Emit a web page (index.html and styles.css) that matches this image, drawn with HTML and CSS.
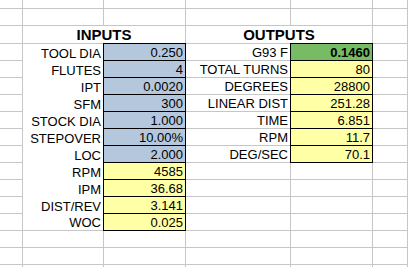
FILE: index.html
```html
<!DOCTYPE html>
<html>
<head>
<meta charset="utf-8">
<link rel="stylesheet" href="styles.css">
</head>
<body>
<div class="sheet">
  <div class="c"></div><div class="c"></div><div class="c"></div><div class="c"></div><div class="c"></div><div class="c"></div>
  <div class="c"></div><div class="c"></div><div class="c"></div><div class="c"></div><div class="c"></div><div class="c"></div>

  <div class="c"></div><div class="c hd">INPUTS</div><div class="c hd">OUTPUTS</div><div class="c"></div>

  <div class="c"></div><div class="c lab">TOOL DIA</div><div class="c d in">0.250</div><div class="c r">G93 F</div><div class="c d g">0.1460</div><div class="c"></div>
  <div class="c"></div><div class="c lab">FLUTES</div><div class="c d in">4</div><div class="c r">TOTAL TURNS</div><div class="c d out">80</div><div class="c"></div>
  <div class="c"></div><div class="c lab">IPT</div><div class="c d in">0.0020</div><div class="c r">DEGREES</div><div class="c d out">28800</div><div class="c"></div>
  <div class="c"></div><div class="c lab">SFM</div><div class="c d in">300</div><div class="c r">LINEAR DIST</div><div class="c d out">251.28</div><div class="c"></div>
  <div class="c"></div><div class="c lab">STOCK DIA</div><div class="c d in">1.000</div><div class="c r">TIME</div><div class="c d out">6.851</div><div class="c"></div>
  <div class="c"></div><div class="c lab">STEPOVER</div><div class="c d in">10.00%</div><div class="c r">RPM</div><div class="c d out">11.7</div><div class="c"></div>
  <div class="c"></div><div class="c lab">LOC</div><div class="c d in">2.000</div><div class="c r">DEG/SEC</div><div class="c d out">70.1</div><div class="c"></div>
  <div class="c"></div><div class="c lab">RPM</div><div class="c d out">4585</div><div class="c"></div><div class="c"></div><div class="c"></div>
  <div class="c"></div><div class="c lab">IPM</div><div class="c d out">36.68</div><div class="c"></div><div class="c"></div><div class="c"></div>
  <div class="c"></div><div class="c lab">DIST/REV</div><div class="c d out">3.141</div><div class="c"></div><div class="c"></div><div class="c"></div>
  <div class="c"></div><div class="c lab last">WOC</div><div class="c d out">0.025</div><div class="c"></div><div class="c"></div><div class="c"></div>

  <div class="c"></div><div class="c"></div><div class="c"></div><div class="c"></div><div class="c"></div><div class="c"></div>
  <div class="c"></div><div class="c"></div><div class="c"></div><div class="c"></div><div class="c"></div><div class="c"></div>
  <div class="c end"></div><div class="c end"></div><div class="c end"></div><div class="c end"></div><div class="c end"></div><div class="c end"></div>
</div>
</body>
</html>
```
FILE: styles.css
```css
html, body {
  margin: 0;
  padding: 0;
  background: #fff;
  overflow: hidden;
}

.sheet {
  display: grid;
  grid-template-columns: 23px 81px 82px 105px 82px 1fr;
  grid-template-rows: 9px 17px 18px repeat(13, 17px) 3px;
  width: 408px;
  height: 267px;
  overflow: hidden;
  font-family: "Liberation Sans", Arial, sans-serif;
  font-size: 13px;
  color: #000;
}

.c {
  box-sizing: border-box;
  border-right: 1px solid #c6c6c6;
  border-bottom: 1px solid #c6c6c6;
  display: flex;
  align-items: flex-end;
  justify-content: flex-end;
  padding: 0 2px 0 0;
  line-height: 15px;
  white-space: nowrap;
  overflow: hidden;
}

.c.end {
  border-bottom: none;
}

.hd {
  grid-column: span 2;
  justify-content: center;
  font-weight: bold;
  font-size: 15px;
  line-height: 17px;
  padding: 0;
}

.lab {
  border-bottom: none;
  background: #fff;
}

.lab.last {
  border-bottom: 1px solid #c6c6c6;
}

.d {
  margin: -1px 0 0 -1px;
  border: 1px solid #000;
}

.in {
  background: #b4c7dc;
}

.out {
  background: #ffffa6;
}

.g {
  background: #77bc65;
  font-weight: bold;
}
```
